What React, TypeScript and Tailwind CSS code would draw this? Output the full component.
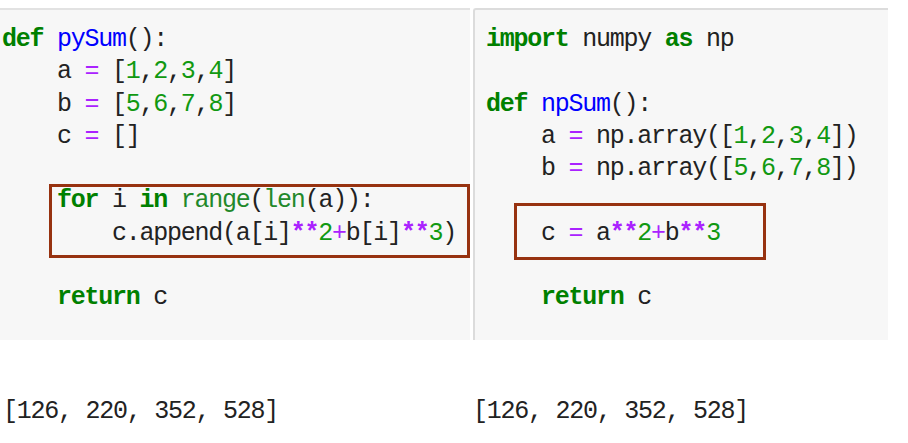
import React from 'react';

type Tok = [string, string?];

const kw = 'font-bold text-[#008000]';
const fn = 'text-[#0000ff]';
const num = 'text-[#119911]';
const op = 'text-[#aa22ff]';
const pow = 'font-bold text-[#aa22ff]';
const bi = 'text-[#22882a]';

const leftCode: Tok[][] = [
  [['def', kw], [' '], ['pySum', fn], ['():']],
  [['    a '], ['=', op], [' ['], ['1', num], [','], ['2', num], [','], ['3', num], [','], ['4', num], [']']],
  [['    b '], ['=', op], [' ['], ['5', num], [','], ['6', num], [','], ['7', num], [','], ['8', num], [']']],
  [['    c '], ['=', op], [' []']],
  [],
  [['    '], ['for', kw], [' i '], ['in', kw], [' '], ['range', bi], ['('], ['len', bi], ['(a)):']],
  [['        c.append(a[i]'], ['**', pow], ['2', num], ['+', op], ['b[i]'], ['**', pow], ['3', num], [')']],
  [],
  [['    '], ['return', kw], [' c']],
];

const rightCode: Tok[][] = [
  [['import', kw], [' numpy '], ['as', kw], [' np']],
  [],
  [['def', kw], [' '], ['npSum', fn], ['():']],
  [['    a '], ['=', op], [' np.array(['], ['1', num], [','], ['2', num], [','], ['3', num], [','], ['4', num], ['])']],
  [['    b '], ['=', op], [' np.array(['], ['5', num], [','], ['6', num], [','], ['7', num], [','], ['8', num], ['])']],
  [],
  [['    c '], ['=', op], [' a'], ['**', pow], ['2', num], ['+', op], ['b'], ['**', pow], ['3', num]],
  [],
  [['    '], ['return', kw], [' c']],
];

function Code({ lines }: { lines: Tok[][] }) {
  return (
    <pre className="font-['Liberation_Mono',monospace] text-[25px] tracking-[-1.25px] leading-[32.3px] text-[#222]">
      {lines.map((line, i) => (
        <div key={i} className="h-[32.3px]">
          {line.map(([t, c], j) => (
            <span key={j} className={c}>
              {t}
            </span>
          ))}
        </div>
      ))}
    </pre>
  );
}

export default function App() {
  return (
    <div className="w-[908px] h-[443px] bg-white overflow-hidden">
      <div className="flex pt-2 h-[340px]">
        {/* left cell */}
        <div className="relative w-[470px] h-full bg-[#f7f7f7] border-t-2 border-[#e2e2e2] pl-[2px] pt-[14px]">
          <Code lines={leftCode} />
          <div className="absolute left-[49px] top-[174px] w-[421px] h-[74px] border-[3px] border-[#973210]" />
        </div>
        <div className="w-[3px]" />
        {/* right cell */}
        <div className="relative w-[415px] h-full bg-[#f7f7f7] border-t-2 border-l-2 border-[#dcdcdc] rounded-tl-[3px] pl-[11px] pt-[14px]">
          <Code lines={rightCode} />
          <div className="absolute left-[39px] top-[193px] w-[252px] h-[57px] border-[3px] border-[#973210]" />
        </div>
      </div>
      <div className="flex pt-[56px] font-['Liberation_Mono',monospace] text-[25px] tracking-[-1.25px] leading-[32px] text-[#222]">
        <div className="w-[473px] pl-[3px]">[126, 220, 352, 528]</div>
        <div>[126, 220, 352, 528]</div>
      </div>
    </div>
  );
}
